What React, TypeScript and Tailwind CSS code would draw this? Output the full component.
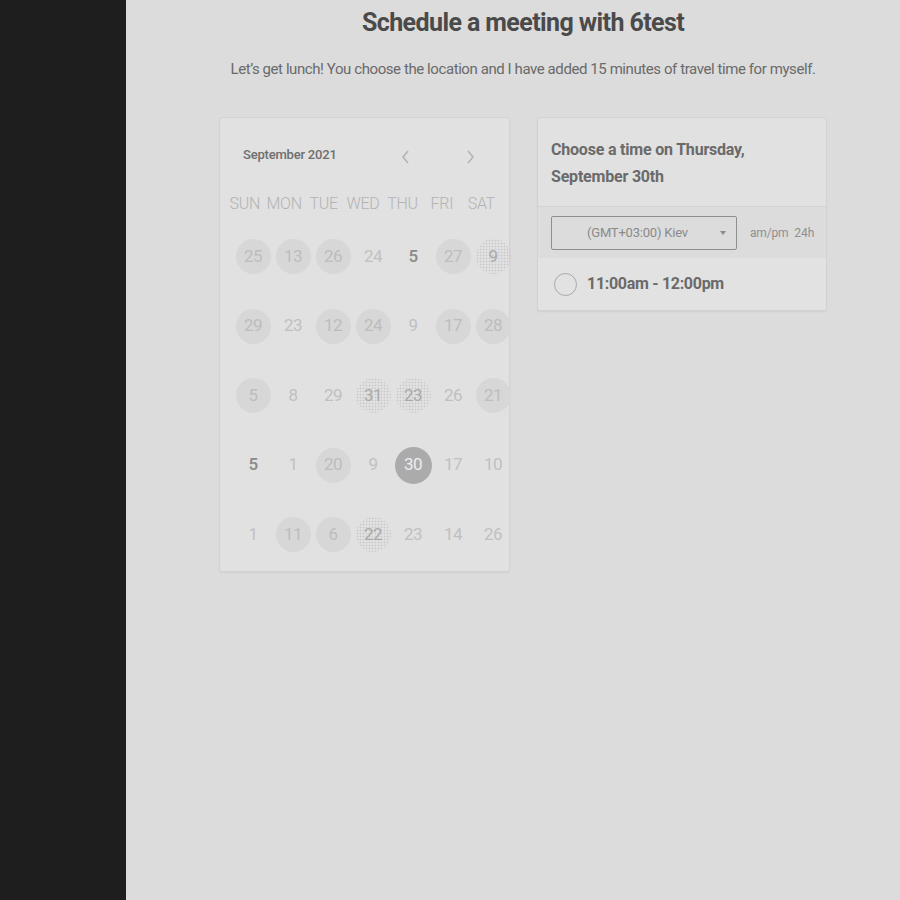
const DAYS = ["SUN", "MON", "TUE", "WED", "THU", "FRI", "SAT"] as const;

type Cell = { n: string; kind?: "circle" | "dots" | "selected" | "dark" };

const WEEKS: Cell[][] = [
  [{ n: "25", kind: "circle" }, { n: "13", kind: "circle" }, { n: "26", kind: "circle" }, { n: "24" }, { n: "5", kind: "dark" }, { n: "27", kind: "circle" }, { n: "9", kind: "dots" }],
  [{ n: "29", kind: "circle" }, { n: "23" }, { n: "12", kind: "circle" }, { n: "24", kind: "circle" }, { n: "9" }, { n: "17", kind: "circle" }, { n: "28", kind: "circle" }],
  [{ n: "5", kind: "circle" }, { n: "8" }, { n: "29" }, { n: "31", kind: "dots" }, { n: "23", kind: "dots" }, { n: "26" }, { n: "21", kind: "circle" }],
  [{ n: "5", kind: "dark" }, { n: "1" }, { n: "20", kind: "circle" }, { n: "9" }, { n: "30", kind: "selected" }, { n: "17" }, { n: "10" }],
  [{ n: "1" }, { n: "11", kind: "circle" }, { n: "6", kind: "circle" }, { n: "22", kind: "dots" }, { n: "23" }, { n: "14" }, { n: "26" }],
];

function DayCell({ cell }: { cell: Cell }) {
  const base = "flex h-[35px] w-[35px] items-center justify-center rounded-full text-[17px] tracking-[-0.5px]";
  if (cell.kind === "circle") return <span className={`${base} bg-[#d7d7d7] text-[#bdbdbd]`}>{cell.n}</span>;
  if (cell.kind === "dots")
    return (
      <span className={`${base} bg-[radial-gradient(#c8c8c8_0.8px,transparent_1.1px)] bg-[length:3px_3px] text-[#a9a9a9]`}>
        {cell.n}
      </span>
    );
  if (cell.kind === "selected")
    return <span className={`${base} -my-px h-[37px] w-[37px] bg-[#ababab] text-[#eeeeee]`}>{cell.n}</span>;
  if (cell.kind === "dark") return <span className={`${base} font-medium text-[#8a8a8a]`}>{cell.n}</span>;
  return <span className={`${base} text-[#c0c0c0]`}>{cell.n}</span>;
}

function Chevron({ dir }: { dir: "left" | "right" }) {
  return (
    <svg width="12" height="16" viewBox="0 0 12 16" fill="none" stroke="#b4b4b4" strokeWidth="1.6">
      {dir === "left" ? <path d="M8 2 L3 8 L8 14" /> : <path d="M4 2 L9 8 L4 14" />}
    </svg>
  );
}

export default function App() {
  return (
    <div className="flex h-[900px] w-[900px] bg-[#dcdcdc] font-['Roboto',sans-serif]">
      <aside className="w-[126px] shrink-0 bg-[#1e1e1e]" />
      <main className="flex-1 pl-[20px]">
        <h1 className="mt-[6px] text-center text-[25px] font-bold leading-[34px] tracking-[-0.6px] text-[#4a4a4a]">
          Schedule a meeting with 6test
        </h1>
        <p className="mt-[19px] text-center text-[15px] leading-[20px] tracking-[-0.42px] text-[#6a6a6a]">
          Let’s get lunch! You choose the location and I have added 15 minutes of travel time for myself.
        </p>

        <div className="mt-[38px] flex items-start gap-[27px] pl-[73px]">
          <section className="h-[455px] w-[291px] shrink-0 rounded-[3px] border border-[#d3d3d3] bg-[#e1e1e1] shadow-[0_1px_2px_rgba(0,0,0,0.06)]">
            <div className="flex items-center pl-[23px] pt-[26px]">
              <span className="w-[145px] text-[13px] font-medium tracking-[-0.2px] text-[#6e6e6e]">September 2021</span>
              <span className="ml-[12px] mt-[5px]"><Chevron dir="left" /></span>
              <span className="ml-[52px] mt-[5px]"><Chevron dir="right" /></span>
            </div>
            <div className="ml-[5px] mt-[29px] grid w-[276px] grid-cols-7">
              {DAYS.map((d) => (
                <span key={d} className="text-center text-[16px] font-light leading-[20px] tracking-[-0.3px] text-[#b3b3b3]">{d}</span>
              ))}
            </div>
            <div className="ml-[13px] mt-[25px] grid w-[280px] grid-cols-7 gap-y-[34.5px]">
              {WEEKS.flat().map((c, i) => (
                <div key={i} className="flex h-[35px] items-center justify-center">
                  <DayCell cell={c} />
                </div>
              ))}
            </div>
          </section>

          <section className="w-[290px] shrink-0 overflow-hidden rounded-[3px] border border-[#d3d3d3] bg-[#e1e1e1] shadow-[0_1px_2px_rgba(0,0,0,0.06)]">
            <div className="border-b border-[#d3d3d3] px-[13px] pb-[16px] pt-[18px]">
              <p className="text-[16px] font-bold leading-[27px] tracking-[-0.2px] text-[#6a6a6a]">
                Choose a time on Thursday,
                <br />
                September 30th
              </p>
            </div>
            <div className="flex items-center bg-[#dcdcdc] px-[13px] pb-[8px] pt-[9px]">
              <div className="flex h-[34px] w-[186px] shrink-0 items-center rounded-[2px] border border-[#8f8f8f] pl-[35px] pr-[10px]">
                <span className="flex-1 text-[13px] tracking-[-0.2px] text-[#8a8a8a]">(GMT+03:00) Kiev</span>
                <span className="h-0 w-0 border-x-[3px] border-t-[4px] border-x-transparent border-t-[#8a8a8a]" />
              </div>
              <span className="ml-[13px] text-[12px] tracking-[-0.2px] text-[#8f8f8f]">am/pm</span>
              <span className="ml-[6px] text-[12px] text-[#8f8f8f]">24h</span>
            </div>
            <div className="flex h-[52px] items-center bg-[#e2e2e2] px-[16px]">
              <span className="h-[23px] w-[23px] rounded-full border-[1.5px] border-[#a8a8a8]" />
              <span className="ml-[10px] text-[16px] font-bold tracking-[-0.3px] text-[#6a6a6a]">11:00am - 12:00pm</span>
            </div>
          </section>
        </div>
      </main>
    </div>
  );
}
